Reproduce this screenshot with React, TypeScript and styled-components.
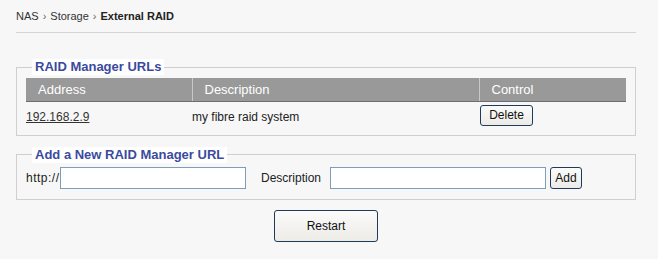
import React from "react";
import styled, { createGlobalStyle } from "styled-components";

const Global = createGlobalStyle`
  html, body { margin: 0; padding: 0; background: #f7f7f7; }
  body { font-family: "Liberation Sans", Arial, sans-serif; color: #222; }
`;

const Page = styled.div`
  padding: 0 22px 0 16px;
  width: 620px;
`;

const Breadcrumb = styled.div`
  font-size: 11px;
  color: #333;
  height: 33px;
  line-height: 13px;
  padding-top: 10px;
  box-sizing: border-box;
  border-bottom: 1px solid #d4d4d4;
`;

const Sep = styled.span`
  margin: 0 4px;
  color: #666;
`;

const Current = styled.b`
  font-weight: bold;
  color: #222;
`;

const Group = styled.fieldset<{ $mt: number; $pt: number; $pb: number }>`
  margin: ${(p) => p.$mt}px 0 0 0;
  padding: ${(p) => p.$pt}px 9px ${(p) => p.$pb}px 9px;
  border: 1px solid #cfcfcf;
  min-width: 0;
`;

const Legend = styled.legend`
  font-size: 13px;
  font-weight: bold;
  color: #3b4aa0;
  background: #fff;
  padding: 0 3px;
  margin-left: 6px;
  line-height: 16px;
`;

const Table = styled.table`
  width: 100%;
  border-collapse: collapse;
  table-layout: fixed;
  font-size: 12px;
`;

const Th = styled.th<{ $w: number; $last?: boolean }>`
  box-sizing: border-box;
  width: ${(p) => p.$w}px;
  background: #999999;
  color: #fff;
  font-weight: normal;
  text-align: left;
  padding: 0 0 0 12px;
  height: 23px;
  font-size: 13px;
  border-bottom: 1px solid #6d6d6d;
  border-right: ${(p) => (p.$last ? "none" : "1px solid #c8c8c8")};
`;

const Td = styled.td<{ $pl: number }>`
  padding: 3px 0 0 ${(p) => p.$pl}px;
  height: 22px;
  vertical-align: top;
  line-height: 24px;
  font-size: 12px;
`;

const Link = styled.a`
  color: #333;
  text-decoration: underline;
`;

const Button = styled.button<{ $w: number; $h: number }>`
  width: ${(p) => p.$w}px;
  height: ${(p) => p.$h}px;
  font-family: "Liberation Sans", Arial, sans-serif;
  font-size: 12px;
  color: #111;
  border: 1px solid #1e3b5c;
  border-radius: 3px;
  background: linear-gradient(#fbfbfb, #ecebe6);
  padding: 0;
  margin: 0;
  vertical-align: top;
`;

const Row = styled.div`
  display: flex;
  align-items: center;
  font-size: 12px;
  padding-top: 4px;
  color: #222;
`;

const Input = styled.input<{ $w: number }>`
  width: ${(p) => p.$w}px;
  height: 22px;
  box-sizing: border-box;
  border: 1px solid #7f9db9;
  background: #fff;
  margin: 0;
  padding: 0 2px;
`;

const Label = styled.span<{ $ml: number; $w: number }>`
  margin-left: ${(p) => p.$ml}px;
  width: ${(p) => p.$w}px;
  white-space: nowrap;
`;

const Scheme = styled.span`
  width: 34px;
  font-size: 12px;
  letter-spacing: 0.5px;
  white-space: nowrap;
`;

const Footer = styled.div`
  display: flex;
  justify-content: center;
  padding-top: 10px;
`;

export default function App() {
  return (
    <>
      <Global />
      <Page>
        <Breadcrumb>
          NAS<Sep>›</Sep>Storage<Sep>›</Sep>
          <Current>External RAID</Current>
        </Breadcrumb>
        <Group $mt={26} $pt={3} $pb={6}>
          <Legend>RAID Manager URLs</Legend>
          <Table>
            <thead>
              <tr>
                <Th $w={166}>Address</Th>
                <Th $w={287}>Description</Th>
                <Th $w={147} $last>
                  Control
                </Th>
              </tr>
            </thead>
            <tbody>
              <tr>
                <Td $pl={0}>
                  <Link href="#">192.168.2.9</Link>
                </Td>
                <Td $pl={0}>my fibre raid system</Td>
                <Td $pl={1}>
                  <Button $w={53} $h={21}>
                    Delete
                  </Button>
                </Td>
              </tr>
            </tbody>
          </Table>
        </Group>
        <Group $mt={11} $pt={0} $pb={10}>
          <Legend>Add a New RAID Manager URL</Legend>
          <Row>
            <Scheme>http://</Scheme>
            <Input $w={186} />
            <Label $ml={15} $w={69}>
              Description
            </Label>
            <Input $w={216} />
            <Label $ml={4} $w={32}>
              <Button $w={32} $h={22}>
                Add
              </Button>
            </Label>
          </Row>
        </Group>
        <Footer>
          <Button $w={104} $h={32}>
            Restart
          </Button>
        </Footer>
      </Page>
    </>
  );
}
